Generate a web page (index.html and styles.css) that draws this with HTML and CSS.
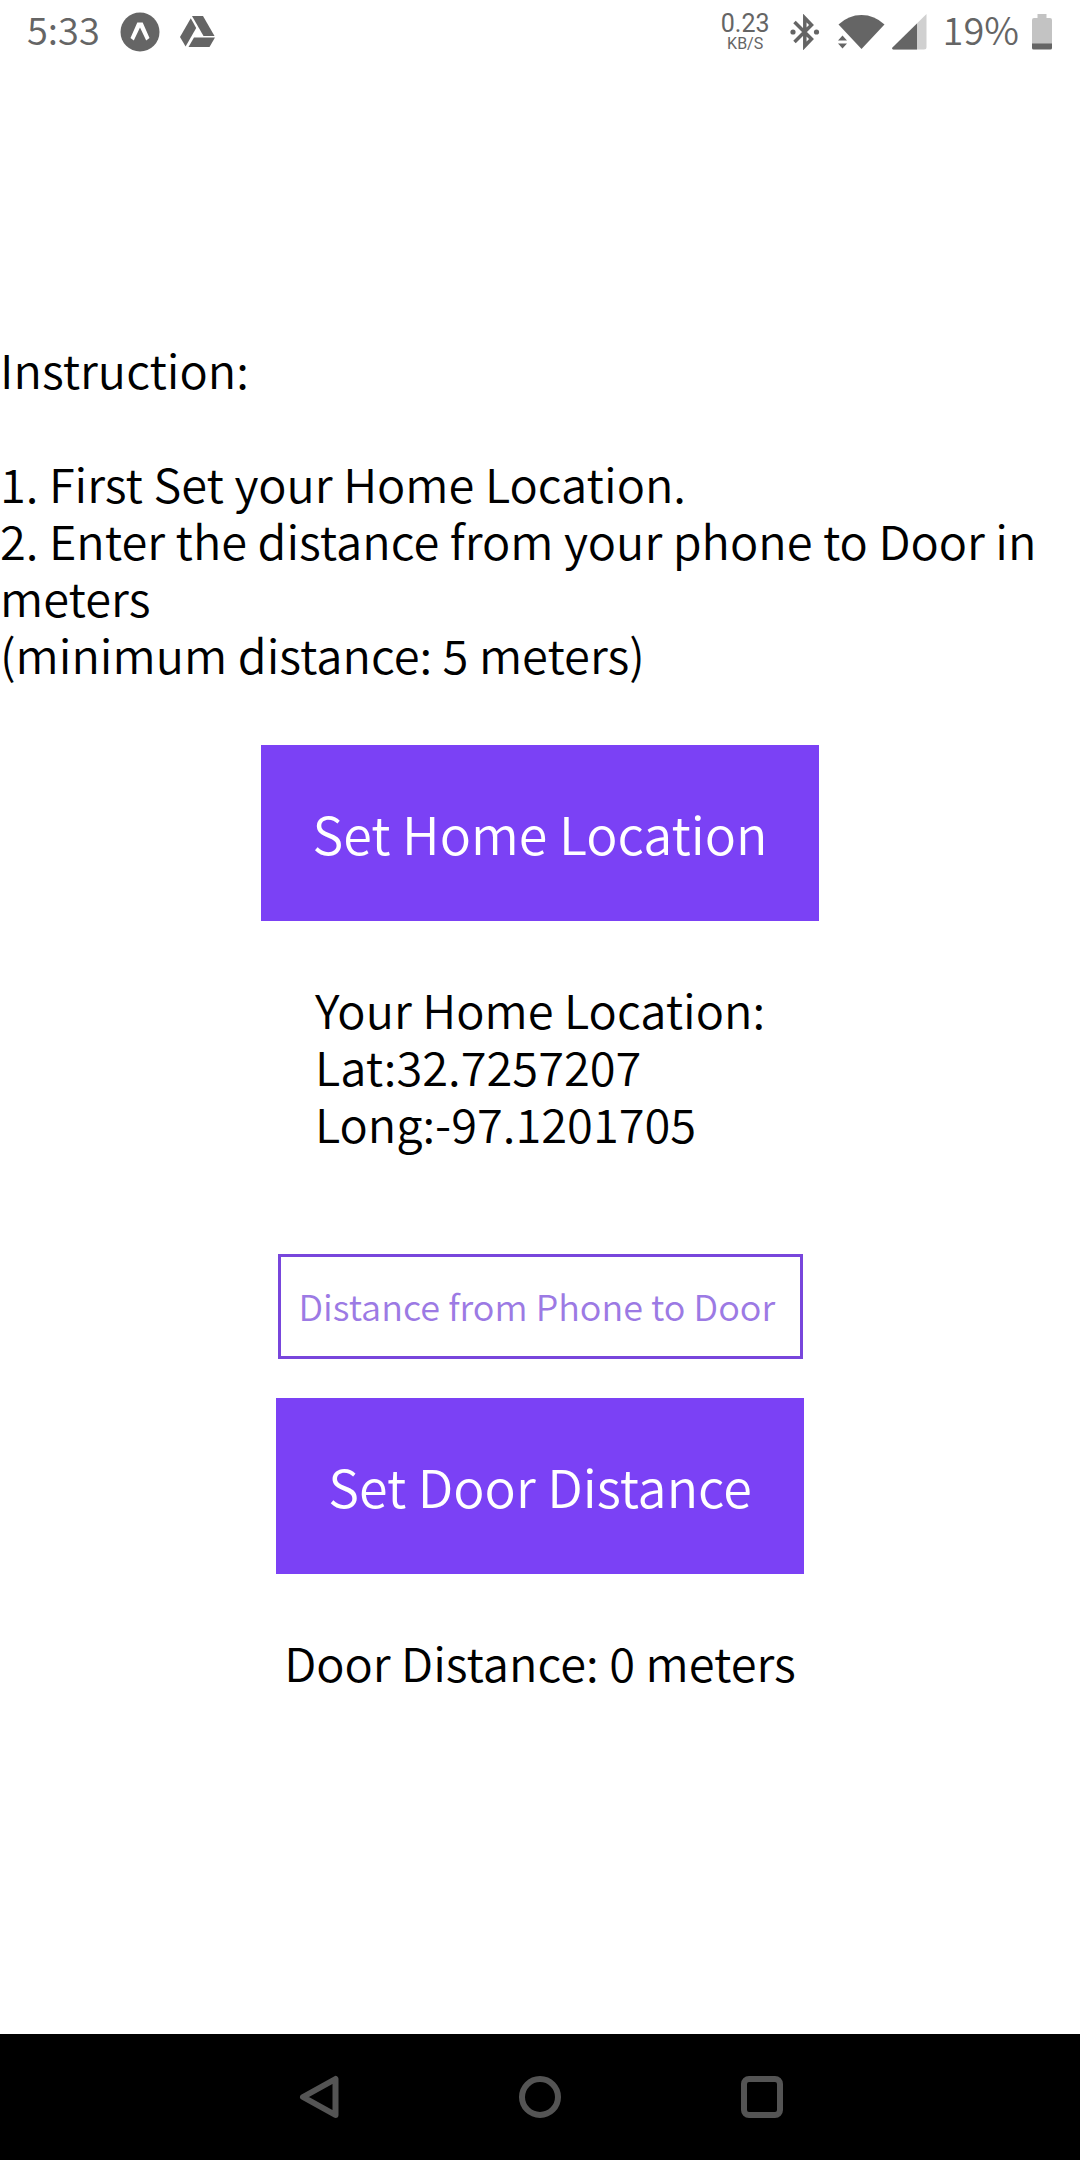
FILE: index.html
```html
<!DOCTYPE html>
<html lang="en">
<head>
  <meta charset="utf-8">
  <meta name="viewport" content="width=device-width, initial-scale=1">
  <title>Home Location</title>
  <link rel="stylesheet" href="styles.css">
</head>
<body>
  <header class="status-bar">
    <div class="status-left">
      <span class="status-text">5:33</span>
      <svg class="icon-expo" width="40" height="40" viewBox="0 0 40 40" aria-hidden="true">
        <circle cx="20" cy="20" r="19.5" fill="#656565"/>
        <path d="M17.3 10.5h5.4l6.8 15.6-3.3 2.3L20 15.6l-6.2 12.8-3.3-2.3z" fill="#fff"/>
      </svg>
      <svg width="35" height="32" viewBox="0 0 35 32" fill="#656565" aria-hidden="true">
        <path d="M12 0h11l11.500 20H23.500z"/>
        <path d="M10.800 2.200L16.200 12 5.600 30.500 0 21z"/>
        <path d="M14 21.500h21L29.500 31H8.500z"/>
      </svg>
    </div>
    <div class="status-right">
      <div class="net-speed"><span class="net-value">0.23</span><span class="net-unit">KB/S</span></div>
      <svg class="icon-bluetooth" width="30" height="36" viewBox="0 0 30 36" aria-hidden="true">
        <path d="M4.500 8L21.500 25 14.800 32V4L21.500 11 4.500 28" fill="none" stroke="#656565" stroke-width="3.500"/>
        <circle cx="3" cy="18" r="2.600" fill="#656565"/>
        <circle cx="26.500" cy="18" r="2.600" fill="#656565"/>
      </svg>
      <svg class="icon-wifi" width="47" height="36" viewBox="0 0 47 36" fill="#656565" aria-hidden="true">
        <path d="M.5 10.500Q10.500 1 23.500 1t23 9.500L23.500 35z"/>
        <path d="M0 26.500L4.500 21.500 9 26.500zM0 29.500h9L4.500 34.500z"/>
      </svg>
      <svg class="icon-signal" width="35" height="36" viewBox="0 0 35 36" aria-hidden="true">
        <path d="M34.500 0v33q0 2.500-2.500 2.500H1.500L0 34z" fill="#d0d0d0"/>
        <path d="M25 9.500v26H1q-1.500-.5-.5-2z" fill="#656565"/>
      </svg>
      <span class="status-text">19%</span>
      <svg width="20" height="36" viewBox="0 0 20 36" aria-hidden="true">
        <path d="M5.500 0h9v4H18q2 0 2 2v24H0V6q0-2 2-2h3.500z" fill="#c3c3c3"/>
        <path d="M0 29.500h20V34q0 1.500-1.500 1.500h-17Q0 35.500 0 34z" fill="#656565"/>
      </svg>
    </div>
  </header>

  <main class="screen">
    <p class="body-text instructions">Instruction:<br><br>1. First Set your Home Location.<br>2. Enter the distance from your phone to Door in meters<br>(minimum distance: 5 meters)</p>
    <button class="action" type="button">Set Home Location</button>
    <p class="body-text result">Your Home Location:<br>Lat:32.7257207<br>Long:-97.1201705</p>
    <input class="distance" type="text" inputmode="numeric" aria-label="Distance from Phone to Door" placeholder="Distance from Phone to Door">
    <button class="action" type="button">Set Door Distance</button>
    <p class="body-text result">Door Distance: 0 meters</p>
  </main>

  <nav class="nav-bar" aria-label="System navigation">
    <button class="nav-button" type="button" aria-label="Back">
      <svg width="44" height="44" viewBox="0 0 44 44"><path d="M39.500 4v36L7 22z"/></svg>
    </button>
    <button class="nav-button" type="button" aria-label="Home">
      <svg width="44" height="44" viewBox="0 0 44 44"><circle cx="22" cy="22" r="18"/></svg>
    </button>
    <button class="nav-button" type="button" aria-label="Recent apps">
      <svg width="44" height="44" viewBox="0 0 44 44"><rect x="4" y="4" width="36" height="36" rx="5"/></svg>
    </button>
  </nav>
</body>
</html>
```

FILE: styles.css
```css
* {
  box-sizing: border-box;
}

body {
  margin: 0;
  min-height: 100vh;
  display: flex;
  flex-direction: column;
  background: #fff;
  color: #000;
  font-family: "Noto Sans CJK SC", "Noto Sans", sans-serif;
  font-weight: 350;
}

svg {
  display: block;
  flex: none;
}

.status-bar {
  display: flex;
  justify-content: space-between;
  align-items: center;
  height: 64px;
  padding: 0 28px 0 27px;
  color: #656565;
}

.status-left,
.status-right {
  display: flex;
  align-items: center;
}

.status-left {
  gap: 20px;
}

.status-text {
  margin-bottom: 6px;
  font-size: 38px;
  line-height: 56px;
}

.net-speed {
  display: flex;
  flex-direction: column;
  align-items: center;
  margin-right: 20px;
  font-family: Roboto, sans-serif;
  font-weight: 400;
}

.net-value {
  font-size: 25px;
  line-height: 24px;
}

.net-unit {
  font-size: 16px;
  line-height: 16px;
}

.icon-bluetooth {
  margin-right: 18px;
}

.icon-wifi {
  margin-right: 7px;
}

.icon-signal {
  margin-right: 16px;
}

.status-right .status-text {
  margin-right: 13px;
}

.screen {
  flex: 1;
  display: flex;
  flex-direction: column;
  justify-content: center;
  align-items: center;
  padding-bottom: 68px;
}

.body-text {
  margin: 0;
  font-size: 47px;
  line-height: 57px;
}

.instructions {
  align-self: stretch;
  margin-bottom: 63px;
}

.action {
  border: 0;
  padding: 58px 52px;
  background: #7b41f5;
  color: #fff;
  font: inherit;
  font-size: 52px;
  line-height: 60px;
}

.result {
  margin-top: 59px;
}

.distance {
  width: 525px;
  max-width: 100%;
  height: 105px;
  margin: 103px 0 39px;
  padding: 0 18px 4px;
  border: 3px solid #7846dc;
  border-radius: 0;
  background: #fff;
  color: #7846dc;
  font: inherit;
  font-size: 36px;
}

.distance::placeholder {
  color: #9c7ae4;
  opacity: 1;
}

.nav-bar {
  display: flex;
  justify-content: center;
  height: 126px;
  background: #000;
}

.nav-button {
  width: 222px;
  padding: 0;
  border: 0;
  background: none;
  display: flex;
  justify-content: center;
  align-items: center;
}

.nav-button svg {
  fill: none;
  stroke: #545454;
  stroke-width: 6;
  stroke-linejoin: round;
}
```
